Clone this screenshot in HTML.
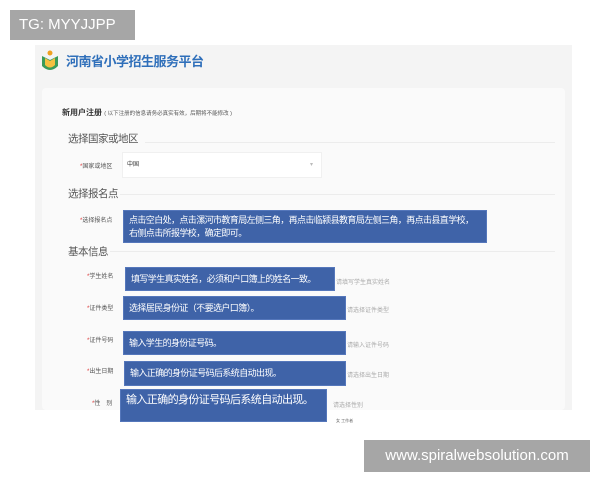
<!DOCTYPE html>
<html><head><meta charset="utf-8"><style>
body{margin:0;width:600px;height:480px;background:#fff;position:relative;overflow:hidden;font-family:"Liberation Sans","Noto Sans CJK SC",sans-serif;}
.a{position:absolute;white-space:nowrap;}
.tg{left:10px;top:10px;width:125px;height:30px;background:#a6a6a6;color:#fff;font-size:15px;line-height:30px;text-indent:9px;}
.shot{left:35px;top:45px;width:537px;height:365px;background:#f4f4f4;}
.card{left:42px;top:88px;width:523px;height:322px;background:#fafafa;border-radius:4px;}
.title{left:66px;top:51px;color:#2f6fba;font-size:13px;font-weight:bold;letter-spacing:-0.5px;}
.sec{color:#555;font-size:10.5px;letter-spacing:-0.5px;}
.line{height:1px;background:#ececec;}
.lab{color:#555;font-size:6px;}
.lab b{color:#d33;font-weight:normal;}
.ph{color:#aaa;font-size:6px;}
.blue{background:#3f63a8;border:1px solid #5577bb;color:#fff;font-size:9px;box-sizing:border-box;padding:0 5px;line-height:22px;letter-spacing:-0.6px;}
.wm{left:364px;top:440px;width:226px;height:32px;background:#a6a6a6;color:#fff;font-size:15px;line-height:32px;text-align:center;}
</style></head><body>
<div class="a tg">TG: MYYJJPP</div>
<div class="a shot"></div>
<svg class="a" style="left:40px;top:48px" width="20" height="26" viewBox="0 0 20 26"><circle cx="10" cy="5" r="2.5" fill="#f0a020"/><path d="M2 8 L10 12 L18 8 L18 18 Q10 26 2 18 Z" fill="#3a9b5a"/><path d="M5 10 L10 13 L15 10 L15 17 Q10 22 5 17 Z" fill="#f3c040"/></svg>
<div class="a title">河南省小学招生服务平台</div>
<div class="a card"></div>
<div class="a" style="left:62px;top:107px;font-size:8px;font-weight:bold;color:#333">新用户注册 <span style="font-weight:normal;font-size:5.5px;color:#555">( 以下注册的信息请务必真实有效，后期将不能修改 )</span></div>
<div class="a sec" style="left:68px;top:131px">选择国家或地区</div>
<div class="a line" style="left:145px;top:142px;width:410px"></div>
<div class="a lab" style="left:80px;top:161px"><b>*</b>国家或地区</div>
<div class="a" style="left:122px;top:152px;width:200px;height:26px;background:#fff;border:1px solid #f0f0f0;box-sizing:border-box;font-size:6px;color:#333;line-height:24px;text-indent:4px">中国<span style="position:absolute;right:8px;color:#bbb">▾</span></div>
<div class="a sec" style="left:68px;top:186px">选择报名点</div>
<div class="a line" style="left:120px;top:194px;width:435px"></div>
<div class="a lab" style="left:80px;top:215px"><b>*</b>选择报名点</div>
<div class="a blue" style="left:123px;top:210px;width:364px;height:33px;padding-top:3px;line-height:13px;white-space:normal">点击空白处，点击漯河市教育局左侧三角，再点击临颍县教育局左侧三角，再点击县直学校，右侧点击所报学校，确定即可。</div>
<div class="a sec" style="left:68px;top:244px">基本信息</div>
<div class="a line" style="left:110px;top:251px;width:445px"></div>
<div class="a lab" style="left:87px;top:271px"><b>*</b>学生姓名</div>
<div class="a blue" style="left:125px;top:267px;width:210px;height:24px">填写学生真实姓名，必须和户口簿上的姓名一致。</div>
<div class="a ph" style="left:336px;top:277px">请填写学生真实姓名</div>
<div class="a lab" style="left:87px;top:303px"><b>*</b>证件类型</div>
<div class="a blue" style="left:123px;top:296px;width:223px;height:24px">选择居民身份证（不要选户口簿）。</div>
<div class="a ph" style="left:347px;top:305px">请选择证件类型</div>
<div class="a lab" style="left:87px;top:335px"><b>*</b>证件号码</div>
<div class="a blue" style="left:123px;top:331px;width:223px;height:24px">输入学生的身份证号码。</div>
<div class="a ph" style="left:347px;top:340px">请输入证件号码</div>
<div class="a lab" style="left:87px;top:366px"><b>*</b>出生日期</div>
<div class="a blue" style="left:124px;top:361px;width:222px;height:25px">输入正确的身份证号码后系统自动出现。</div>
<div class="a ph" style="left:347px;top:370px">请选择出生日期</div>
<div class="a lab" style="left:92px;top:398px"><b>*</b>性　别</div>
<div class="a ph" style="left:333px;top:400px">请选择性别</div>
<div class="a ph" style="left:336px;top:418px;font-size:4px;color:#666">女 工作者</div>
<div class="a blue" style="left:120px;top:389px;width:207px;height:33px;font-size:11px;line-height:20px;padding-top:0">输入正确的身份证号码后系统自动出现。</div>
<div class="a wm">www.spiralwebsolution.com</div>
</body></html>
